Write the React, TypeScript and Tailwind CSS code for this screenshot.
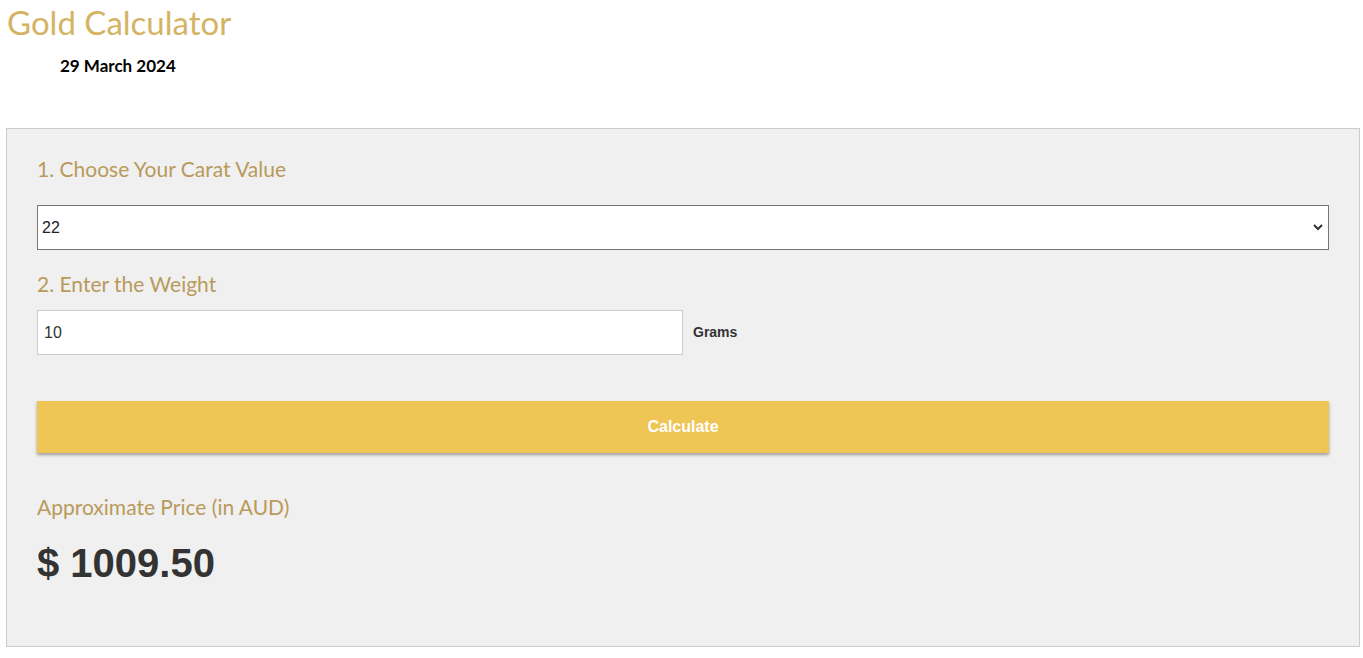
import React from "react";

export default function App() {
  return (
    <div className="bg-white min-h-[658px] w-[1363px]" style={{ fontFamily: "Lato, 'Open Sans', sans-serif" }}>
      <h1 className="pl-[7px] pt-[2px] text-[33px] leading-[40px] text-[#d4b463] font-normal">Gold Calculator</h1>
      <div className="pl-[60px] pt-[14px] text-[17px] leading-[20px] font-bold text-black">29 March 2024</div>
      <div className="ml-[6px] mr-[3px] mt-[52px] border border-[#cccccc] bg-[#f0f0f0] px-[30px] pt-[26px] pb-[60px]">
        <h2 className="text-[21px] leading-[28px] text-[#b99a5b]">1. Choose Your Carat Value</h2>
        <div className="mt-[22px] relative">
          <select
            defaultValue="22"
            className="w-full h-[45px] border border-[#767676] bg-white pl-[4px] text-[16px] text-[#222] appearance-none"
            style={{ fontFamily: "Arial, 'Liberation Sans', sans-serif" }}
          >
            <option>18</option>
            <option>22</option>
            <option>24</option>
          </select>
          <svg className="absolute right-[6px] top-[18px]" width="10" height="8" viewBox="0 0 10 8">
            <path d="M1 2 L5 6 L9 2" stroke="#333" strokeWidth="2" fill="none" />
          </svg>
        </div>
        <h2 className="mt-[20px] text-[21px] leading-[28px] text-[#b99a5b]">2. Enter the Weight</h2>
        <div className="mt-[12px] flex items-center">
          <input
            defaultValue="10"
            className="w-[646px] h-[45px] border border-[#cccccc] bg-white pl-[6px] text-[16px] text-[#333]"
            style={{ fontFamily: "Arial, 'Liberation Sans', sans-serif" }}
          />
          <span className="ml-[10px] text-[14px] font-bold text-[#333]" style={{ fontFamily: "Arial, 'Liberation Sans', sans-serif" }}>Grams</span>
        </div>
        <button
          className="mt-[46px] w-full h-[52px] bg-[#efc555] text-white text-[16px] font-bold shadow-[0_2px_3px_rgba(0,0,0,0.35)]"
          style={{ fontFamily: "Arial, 'Liberation Sans', sans-serif" }}
        >
          Calculate
        </button>
        <h2 className="mt-[40px] text-[21px] leading-[28px] text-[#b99a5b]">Approximate Price (in AUD)</h2>
        <div className="mt-[19px] text-[40px] leading-[46px] font-bold text-[#333]" style={{ fontFamily: "Arial, 'Liberation Sans', sans-serif" }}>$ 1009.50</div>
      </div>
    </div>
  );
}
